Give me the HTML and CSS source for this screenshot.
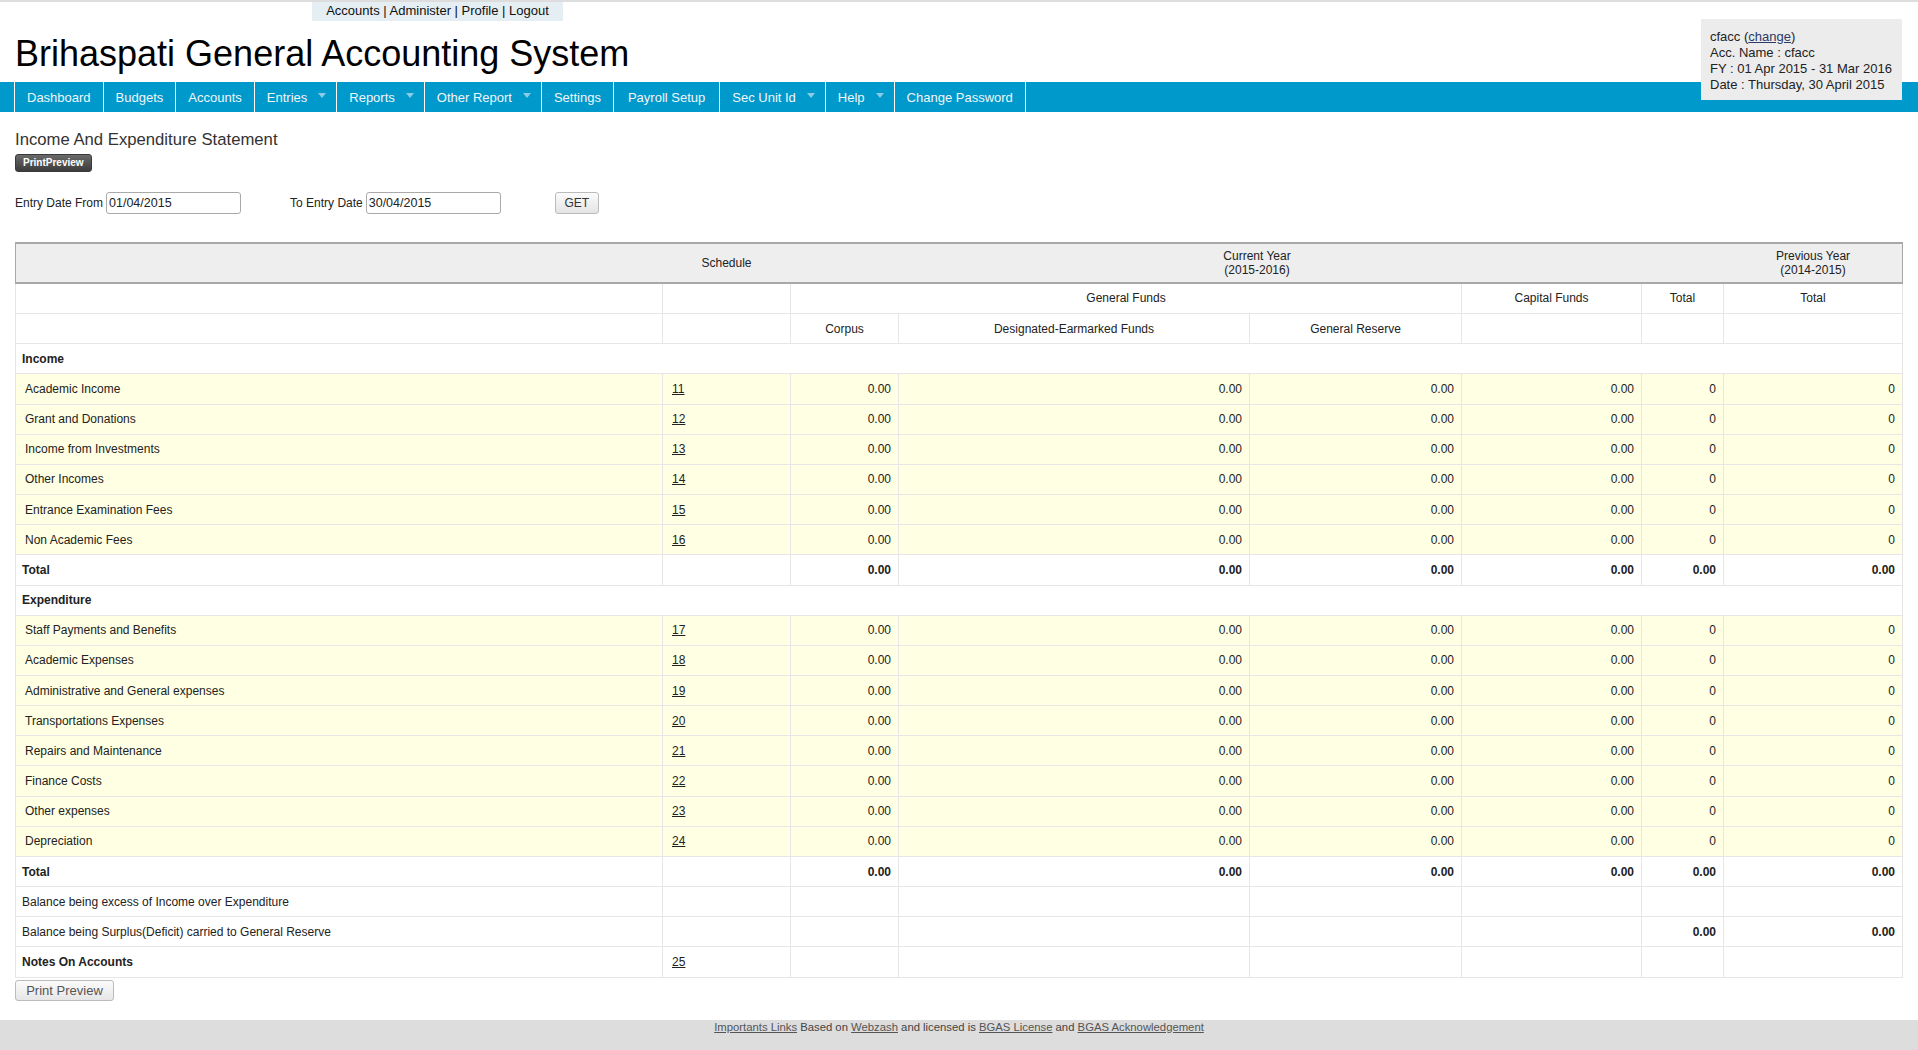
FILE: index.html
```html
<!DOCTYPE html>
<html>
<head>
<meta charset="utf-8">
<title>Income And Expenditure Statement</title>
<link rel="stylesheet" href="styles.css">
</head>
<body>
<header class="top">
  <div class="toplinks"><a href="#">Accounts</a> | <a href="#">Administer</a> | <a href="#">Profile</a> | <a href="#">Logout</a></div>
  <h1 class="brand">Brihaspati General Accounting System</h1>
  <div class="userbox">
    <div>cfacc (<a href="#">change</a>)</div>
    <div>Acc. Name : cfacc</div>
    <div>FY : 01 Apr 2015 - 31 Mar 2016</div>
    <div>Date : Thursday, 30 April 2015</div>
  </div>
</header>
<nav class="menu">
  <ul>
    <li><a href="#">Dashboard</a></li>
    <li><a href="#">Budgets</a></li>
    <li><a href="#">Accounts</a></li>
    <li class="dd"><a href="#">Entries<span class="arr"></span></a></li>
    <li class="dd"><a href="#">Reports<span class="arr"></span></a></li>
    <li class="dd"><a href="#">Other Report<span class="arr"></span></a></li>
    <li><a href="#">Settings</a></li>
    <li class="wide"><a href="#">Payroll Setup</a></li>
    <li class="dd"><a href="#">Sec Unit Id<span class="arr"></span></a></li>
    <li class="dd"><a href="#">Help<span class="arr"></span></a></li>
    <li><a href="#">Change Password</a></li>
  </ul>
</nav>
<main class="content">
  <h2 class="title">Income And Expenditure Statement</h2>
  <a class="btn-dark" href="#">PrintPreview</a>
  <form class="filter">
    <label class="lbl">Entry Date From</label>
    <input class="date" type="text" value="01/04/2015">
    <label class="lbl lbl-to">To Entry Date</label>
    <input class="date" type="text" value="30/04/2015">
    <button class="btn-get" type="button">GET</button>
  </form>
  <table class="report">
    <colgroup>
      <col class="w-name"><col class="w-sch"><col class="w-corp"><col class="w-des"><col class="w-gr"><col class="w-cap"><col class="w-tot"><col class="w-prev">
    </colgroup>
    <thead>
      <tr class="hr1"><th></th><th>Schedule</th><th colspan="5">Current Year<br>(2015-2016)</th><th>Previous Year<br>(2014-2015)</th></tr>
      <tr class="hr2"><th></th><th></th><th colspan="3">General Funds</th><th>Capital Funds</th><th>Total</th><th>Total</th></tr>
      <tr class="hr2"><th></th><th></th><th>Corpus</th><th>Designated-Earmarked Funds</th><th>General Reserve</th><th></th><th></th><th></th></tr>
    </thead>
    <tbody>
      <tr class="sec"><td colspan="8">Income</td></tr>
      <tr class="item"><td class="name">Academic Income</td><td class="sch"><a href="#">11</a></td><td class="n">0.00</td><td class="n">0.00</td><td class="n">0.00</td><td class="n">0.00</td><td class="n">0</td><td class="n">0</td></tr>
      <tr class="item"><td class="name">Grant and Donations</td><td class="sch"><a href="#">12</a></td><td class="n">0.00</td><td class="n">0.00</td><td class="n">0.00</td><td class="n">0.00</td><td class="n">0</td><td class="n">0</td></tr>
      <tr class="item"><td class="name">Income from Investments</td><td class="sch"><a href="#">13</a></td><td class="n">0.00</td><td class="n">0.00</td><td class="n">0.00</td><td class="n">0.00</td><td class="n">0</td><td class="n">0</td></tr>
      <tr class="item"><td class="name">Other Incomes</td><td class="sch"><a href="#">14</a></td><td class="n">0.00</td><td class="n">0.00</td><td class="n">0.00</td><td class="n">0.00</td><td class="n">0</td><td class="n">0</td></tr>
      <tr class="item"><td class="name">Entrance Examination Fees</td><td class="sch"><a href="#">15</a></td><td class="n">0.00</td><td class="n">0.00</td><td class="n">0.00</td><td class="n">0.00</td><td class="n">0</td><td class="n">0</td></tr>
      <tr class="item"><td class="name">Non Academic Fees</td><td class="sch"><a href="#">16</a></td><td class="n">0.00</td><td class="n">0.00</td><td class="n">0.00</td><td class="n">0.00</td><td class="n">0</td><td class="n">0</td></tr>
      <tr class="tot"><td class="lab">Total</td><td></td><td class="n">0.00</td><td class="n">0.00</td><td class="n">0.00</td><td class="n">0.00</td><td class="n">0.00</td><td class="n">0.00</td></tr>
      <tr class="sec"><td colspan="8">Expenditure</td></tr>
      <tr class="item"><td class="name">Staff Payments and Benefits</td><td class="sch"><a href="#">17</a></td><td class="n">0.00</td><td class="n">0.00</td><td class="n">0.00</td><td class="n">0.00</td><td class="n">0</td><td class="n">0</td></tr>
      <tr class="item"><td class="name">Academic Expenses</td><td class="sch"><a href="#">18</a></td><td class="n">0.00</td><td class="n">0.00</td><td class="n">0.00</td><td class="n">0.00</td><td class="n">0</td><td class="n">0</td></tr>
      <tr class="item"><td class="name">Administrative and General expenses</td><td class="sch"><a href="#">19</a></td><td class="n">0.00</td><td class="n">0.00</td><td class="n">0.00</td><td class="n">0.00</td><td class="n">0</td><td class="n">0</td></tr>
      <tr class="item"><td class="name">Transportations Expenses</td><td class="sch"><a href="#">20</a></td><td class="n">0.00</td><td class="n">0.00</td><td class="n">0.00</td><td class="n">0.00</td><td class="n">0</td><td class="n">0</td></tr>
      <tr class="item"><td class="name">Repairs and Maintenance</td><td class="sch"><a href="#">21</a></td><td class="n">0.00</td><td class="n">0.00</td><td class="n">0.00</td><td class="n">0.00</td><td class="n">0</td><td class="n">0</td></tr>
      <tr class="item"><td class="name">Finance Costs</td><td class="sch"><a href="#">22</a></td><td class="n">0.00</td><td class="n">0.00</td><td class="n">0.00</td><td class="n">0.00</td><td class="n">0</td><td class="n">0</td></tr>
      <tr class="item"><td class="name">Other expenses</td><td class="sch"><a href="#">23</a></td><td class="n">0.00</td><td class="n">0.00</td><td class="n">0.00</td><td class="n">0.00</td><td class="n">0</td><td class="n">0</td></tr>
      <tr class="item"><td class="name">Depreciation</td><td class="sch"><a href="#">24</a></td><td class="n">0.00</td><td class="n">0.00</td><td class="n">0.00</td><td class="n">0.00</td><td class="n">0</td><td class="n">0</td></tr>
      <tr class="tot"><td class="lab">Total</td><td></td><td class="n">0.00</td><td class="n">0.00</td><td class="n">0.00</td><td class="n">0.00</td><td class="n">0.00</td><td class="n">0.00</td></tr>
      <tr class="plain"><td class="lab">Balance being excess of Income over Expenditure</td><td></td><td></td><td></td><td></td><td></td><td></td><td></td></tr>
      <tr class="plain"><td class="lab">Balance being Surplus(Deficit) carried to General Reserve</td><td></td><td></td><td></td><td></td><td></td><td class="n b">0.00</td><td class="n b">0.00</td></tr>
      <tr class="plain"><td class="lab b">Notes On Accounts</td><td class="sch"><a href="#">25</a></td><td></td><td></td><td></td><td></td><td></td><td></td></tr>
    </tbody>
  </table>
  <button class="btn-light" type="button">Print Preview</button>
</main>
<footer class="foot">
  <a href="#">Importants Links</a> Based on <a href="#">Webzash</a> and licensed is <a href="#">BGAS License</a> and <a href="#">BGAS Acknowledgement</a>
</footer>
</body>
</html>
```
FILE: styles.css
```css
html, body {
  margin: 0;
  padding: 0;
  overflow: hidden;
}
body {
  font-family: "Liberation Sans", Arial, sans-serif;
  font-size: 12px;
  color: #222;
  background: #fff;
}
.top {
  position: relative;
  border-top: 2px solid #dddddd;
}
.toplinks {
  margin-left: 312px;
  width: 251px;
  height: 19px;
  line-height: 17px;
  text-align: center;
  background: #e4eef3;
  font-size: 13px;
  color: #111;
}
.toplinks a {
  color: #111;
  text-decoration: none;
}
.brand {
  margin: 12px 0 7px 15px;
  font-size: 36px;
  line-height: 42px;
  font-weight: normal;
  color: #000;
}
.userbox {
  position: absolute;
  top: 17px;
  right: 16px;
  width: 183px;
  padding: 10px 9px 7px;
  background: #ececec;
  font-size: 13px;
  line-height: 16px;
  color: #222;
  z-index: 5;
  white-space: nowrap;
}
.userbox a {
  color: #2b3a67;
}
.menu {
  height: 30px;
  background: #0099cc;
}
.menu ul {
  display: flex;
  margin: 0;
  padding: 0 0 0 14px;
  list-style: none;
}
.menu li {
  border-right: 1px solid #fff;
}
.menu li:first-child {
  border-left: 1px solid #fff;
}
.menu a {
  display: flex;
  align-items: center;
  height: 30px;
  padding: 0 12px;
  font-size: 13px;
  color: #f2f6f8;
  text-decoration: none;
}
.menu li.dd a {
  padding-right: 10px;
}
.menu li.wide a {
  padding: 0 14px;
}
.arr {
  display: inline-block;
  width: 0;
  height: 0;
  margin-left: 11px;
  margin-top: -3px;
  border-left: 4px solid transparent;
  border-right: 4px solid transparent;
  border-top: 5px solid #8ccbe4;
}
.content {
  padding: 0 16px 0 15px;
}
.title {
  margin: 18px 0 4px;
  font-size: 16.7px;
  line-height: 20px;
  font-weight: normal;
  color: #333;
}
.btn-dark {
  display: inline-block;
  box-sizing: border-box;
  height: 18px;
  padding: 0 7px;
  line-height: 16px;
  border: 1px solid #3a3a3a;
  border-radius: 3px;
  background: linear-gradient(#6a6a6a, #3c3c3c);
  color: #fff;
  font-size: 10px;
  font-weight: bold;
  text-decoration: none;
  vertical-align: top;
}
.filter {
  display: flex;
  align-items: center;
  height: 22px;
  margin: 20px 0 0;
}
.lbl {
  font-size: 12px;
  color: #222;
  margin-right: 3px;
}
.lbl-to {
  margin-left: 49px;
}
.date {
  box-sizing: border-box;
  width: 135px;
  height: 22px;
  margin: 0;
  padding: 0 2px;
  border: 1px solid #aaa;
  border-radius: 3px;
  font-family: "Liberation Sans", Arial, sans-serif;
  font-size: 12.5px;
  color: #222;
}
.btn-get {
  box-sizing: border-box;
  width: 44px;
  height: 22px;
  margin-left: 54px;
  padding: 0;
  border: 1px solid #bbb;
  border-radius: 3px;
  background: linear-gradient(#fbfbfb, #e4e4e4);
  font-family: "Liberation Sans", Arial, sans-serif;
  font-size: 12px;
  color: #333;
}
.report {
  margin-top: 28px;
  width: 1887px;
  table-layout: fixed;
  border-collapse: collapse;
  font-size: 12px;
  color: #222;
}
.w-name { width: 647px; }
.w-sch { width: 128px; }
.w-corp { width: 108px; }
.w-des { width: 351px; }
.w-gr { width: 212px; }
.w-cap { width: 180px; }
.w-tot { width: 82px; }
.w-prev { width: 179px; }
.report th,
.report td {
  border: 1px solid #e6e6e6;
  padding: 0 7px;
  vertical-align: middle;
}
.report th {
  font-weight: normal;
  text-align: center;
}
.report .hr1 {
  height: 40px;
}
.report .hr1 th {
  background: #eeeeee;
  border-top: 2px solid #a8a8a8;
  border-bottom: 2px solid #a8a8a8;
  border-left: 1px solid #eeeeee;
  border-right: 1px solid #eeeeee;
  line-height: 14px;
}
.report .hr1 th:first-child {
  border-left: 1px solid #a8a8a8;
}
.report .hr1 th:last-child {
  border-right: 1px solid #a8a8a8;
}
.report .hr2 {
  height: 30.4px;
}
.report tbody tr {
  height: 30.16px;
}
.report .sec td {
  font-weight: bold;
  padding-left: 6px;
}
.report .item td {
  background: #ffffe3;
}
.report td.name {
  padding-left: 9px;
}
.report td.lab {
  padding-left: 6px;
}
.report .tot td {
  font-weight: bold;
}
.report td.n {
  text-align: right;
}
.report td.b {
  font-weight: bold;
}
.report td.sch {
  padding-left: 9px;
}
.report td.sch a {
  color: #222;
  text-decoration: underline;
}
.btn-light {
  display: block;
  box-sizing: border-box;
  width: 99px;
  height: 21px;
  margin-top: 2px;
  padding: 0;
  border: 1px solid #bbb;
  border-radius: 3px;
  background: linear-gradient(#fbfbfb, #e6e6e6);
  font-family: "Liberation Sans", Arial, sans-serif;
  font-size: 13px;
  color: #555;
}
.foot {
  margin-top: 19px;
  height: 34px;
  background: #dddddd;
  text-align: center;
  font-size: 11.3px;
  line-height: 14px;
  color: #444;
}
.foot a {
  color: #555;
}
```
